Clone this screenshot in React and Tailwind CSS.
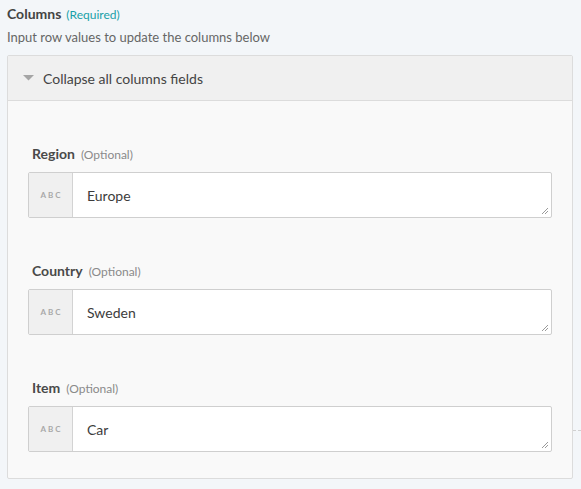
import React from 'react';

const fields = [
  { label: 'Region', value: 'Europe' },
  { label: 'Country', value: 'Sweden' },
  { label: 'Item', value: 'Car' },
];

const Field = ({ label, value }) => (
  <div>
    <div className="flex items-baseline gap-[6px] h-[18px] leading-[18px] pl-[4px]">
      <span className="text-[14px] font-bold text-[#4a4a4a]">{label}</span>
      <span className="text-[12px] text-[#8a8a8a]">(Optional)</span>
    </div>
    <div className="mt-[9px] flex h-[46px] border border-[#cfcfcf] rounded-[2px] bg-white relative">
      <div className="w-[44px] shrink-0 bg-[#f0f0f0] border-r border-[#d3d3d3] flex items-center justify-center text-[8px] font-bold tracking-[2px] text-[#a8a8a8] pl-[2px]">
        ABC
      </div>
      <div className="flex items-center pl-[14px] text-[14px] text-[#3c3c3c]">{value}</div>
      <svg className="absolute right-[2px] bottom-[2px]" width="8" height="8" viewBox="0 0 8 8">
        <path d="M7 1 L1 7 M7 4 L4 7" stroke="#9a9a9a" strokeWidth="1" />
      </svg>
    </div>
  </div>
);

const App = () => {
  return (
    <div className="w-[581px] h-[489px] bg-[#f3f6f9] font-['Lato','Open_Sans',sans-serif] pt-[5px] overflow-hidden relative">
      {/* Title */}
      <div className="px-[7px]">
        <div className="flex items-baseline gap-[5px] h-[18px] leading-[18px]">
          <span className="text-[14px] font-bold text-[#444]">Columns</span>
          <span className="text-[12px] text-[#19a0a8]">(Required)</span>
        </div>
        <p className="mt-[6px] text-[13px] leading-[16px] text-[#666]">Input row values to update the columns below</p>
      </div>

      {/* Panel */}
      <div className="mt-[10px] ml-[7px] w-[566px] border border-[#dcdcdc] rounded-[2px] bg-[#f9f9f9]">
        <div className="h-[45px] bg-[#f0f0f0] border-b border-[#dcdcdc] flex items-center pl-[15px] gap-[9px]">
          <svg width="11" height="6" viewBox="0 0 11 6">
            <path d="M0 0 L11 0 L5.5 5.5 Z" fill="#a5a5a5" />
          </svg>
          <span className="text-[14px] text-[#444]">Collapse all columns fields</span>
        </div>
        <div className="px-[20px] pt-[44px] pb-[26px] flex flex-col gap-[44px]">
          {fields.map((f) => (
            <Field key={f.label} {...f} />
          ))}
        </div>
      </div>

      <div className="absolute right-0 top-[430px] w-[8px] border-t border-dashed border-[#d0d0d0]" />
    </div>
  );
};

export default App;
